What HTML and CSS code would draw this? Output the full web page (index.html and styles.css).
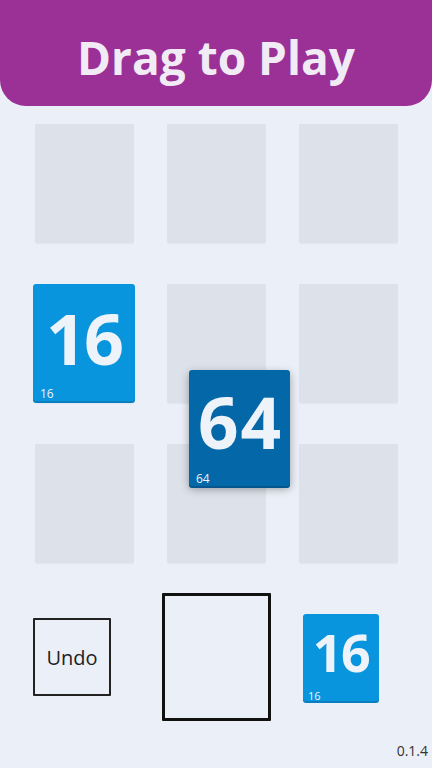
FILE: index.html
```html
<!DOCTYPE html>
<html>
<head>
<meta charset="utf-8">
<link rel="stylesheet" href="styles.css">
</head>
<body>
<div class="page">
  <header class="header"><h1 class="title">Drag to Play</h1></header>
  <div class="board">
    <div class="cell"></div>
    <div class="cell"></div>
    <div class="cell"></div>
    <div class="cell"><div class="tile tile-16 tile-board"><span class="big">16</span><span class="small">16</span></div></div>
    <div class="cell"></div>
    <div class="cell"></div>
    <div class="cell"></div>
    <div class="cell"></div>
    <div class="cell"></div>
    <div class="tile tile-64 dragging"><span class="big">64</span><span class="small">64</span></div>
  </div>
  <div class="controls">
    <button class="undo">Undo</button>
    <div class="drop"></div>
    <div class="tile tile-16 tile-next"><span class="big">16</span><span class="small">16</span></div>
  </div>
  <div class="version">0.1.4</div>
</div>
</body>
</html>
```
FILE: styles.css
```css
* { box-sizing: border-box; }
html, body { margin: 0; padding: 0; }
body {
  background: #ebeff7;
  font-family: "Open Sans", "DejaVu Sans", sans-serif;
}
.page {
  width: 432px;
  height: 768px;
  display: flex;
  flex-direction: column;
  position: relative;
}
.header {
  height: 106px;
  background: #9b3096;
  border-radius: 0 0 26px 26px;
  display: flex;
  align-items: center;
  justify-content: center;
}
.title {
  margin: 0;
  color: #f1ebf6;
  font-family: "Open Sans", sans-serif;
  font-weight: 700;
  font-size: 46px;
  letter-spacing: 0;
  line-height: 1;
  padding-top: 8px;
}
.board {
  margin-top: 18px;
  display: grid;
  grid-template-columns: repeat(3, 99px);
  grid-template-rows: repeat(3, 119px);
  column-gap: 33px;
  row-gap: 41px;
  justify-content: center;
  position: relative;
}
.cell {
  background: #dde1ea;
  border-radius: 2px;
  box-shadow: 0 1px 1px rgba(0,0,0,0.04);
  display: flex;
}
.tile {
  position: relative;
  border-radius: 3px;
  color: #eef3f9;
  font-family: "Open Sans", sans-serif;
  display: flex;
  align-items: center;
  justify-content: center;
}
.tile-16 { background: #0995de; box-shadow: 0 2px 0 #0a7fc0; }
.tile-64 { background: #0468a8; box-shadow: 0 2px 0 #04568c, 0 3px 8px rgba(0,0,0,0.35); }
.tile .big {
  display: block;
  font-weight: 700;
  font-size: 70px;
  line-height: 0.75;
  letter-spacing: -2px;
  margin-top: -8px;
}
.tile-64 .big {
  font-size: 71px;
  letter-spacing: 2px;
  margin-left: 2px;
  margin-top: -12px;
}
.tile .small {
  display: block;
  position: absolute;
  left: 7px;
  bottom: 1px;
  font-size: 12px;
  line-height: 1;
  font-weight: 400;
}
.tile-board {
  flex: 1;
  margin: 0 -1.5px 2px;
}
.dragging {
  position: absolute;
  left: 189px;
  top: 246px;
  width: 101px;
  height: 116px;
}
.controls {
  margin-top: 30px;
  display: flex;
  align-items: center;
  height: 128px;
}
.undo {
  margin-left: 33px;
  width: 78px;
  height: 78px;
  background: transparent;
  border: 2px solid #222;
  border-radius: 1px;
  font-family: "Open Sans", sans-serif;
  font-size: 20px;
  color: #222;
  padding: 0;
}
.drop {
  margin-left: 51px;
  width: 109px;
  height: 128px;
  border: 3px solid #111;
  border-radius: 1px;
}
.tile-next {
  margin-left: 32px;
  width: 76px;
  height: 87px;
}
.tile-next .big {
  font-size: 52px;
  margin-top: -12px;
  letter-spacing: -1.5px;
}
.tile-next .small {
  font-size: 11px;
  left: 5px;
  bottom: 0;
}
.version {
  margin-top: auto;
  text-align: right;
  padding: 0 4px 8px 0;
  font-size: 14px;
  color: #333;
}
```
